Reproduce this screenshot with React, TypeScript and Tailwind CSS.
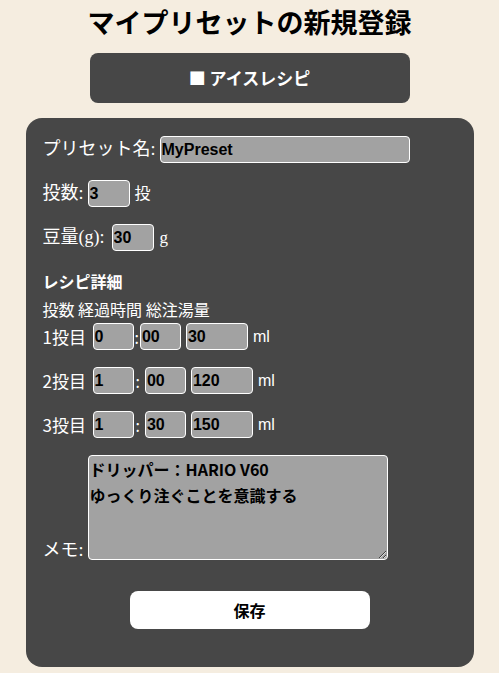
import React from "react";

const serif = { fontFamily: '"Liberation Serif", "Noto Sans CJK JP", serif' };
const inpFont = { fontFamily: '"Liberation Sans", "Noto Sans CJK JP", sans-serif' };

function Inp({ w, value }: { w: string; value: string }) {
  return (
    <input
      readOnly
      value={value}
      style={inpFont}
      className={`${w} h-[27px] bg-[#a2a2a2] border border-white rounded-[4px] px-[1px] text-[16px] font-bold text-black outline-none`}
    />
  );
}

export default function App() {
  const rows = [
    { n: "1投目", m: "0", s: "00", t: "30", tight: true },
    { n: "2投目", m: "1", s: "00", t: "120", tight: false },
    { n: "3投目", m: "1", s: "30", t: "150", tight: false },
  ];
  return (
    <div className="min-h-[673px] w-full bg-[#f5ede0] flex flex-col items-center font-['Noto_Sans_CJK_JP',sans-serif]">
      <h1 className="mt-[2px] text-[27px] leading-[40px] font-bold text-black">マイプリセットの新規登録</h1>
      <div className="mt-[11px] w-[320px] h-[50px] rounded-[8px] bg-[#474747] flex items-center justify-center text-white text-[17px] font-bold">
        ■ アイスレシピ
      </div>
      <div className="mt-[15px] w-[448px] h-[549px] rounded-[16px] bg-[#474747] pl-[17px] pt-[18px] text-white">
        <div className="flex items-center h-[27px]">
          <span className="text-[18px] mr-[4px]" style={serif}>プリセット名:</span>
          <Inp w="w-[250px]" value="MyPreset" />
        </div>
        <div className="flex items-center h-[27px] mt-[17px]">
          <span className="text-[18px] mr-[4px]" style={serif}>投数:</span>
          <Inp w="w-[42px]" value="3" />
          <span className="text-[16px] ml-[5px]" style={serif}>投</span>
        </div>
        <div className="flex items-center h-[27px] mt-[17px]">
          <span className="text-[18px] mr-[7px]" style={serif}>豆量(g):</span>
          <Inp w="w-[42px]" value="30" />
          <span className="text-[17px] ml-[6px]" style={serif}>g</span>
        </div>
        <div className="mt-[19px] text-[16px] font-bold leading-[22px]">レシピ詳細</div>
        <div className="mt-[6px] text-[16px] leading-[22px]">投数 経過時間 総注湯量</div>
        {rows.map((r, i) => (
          <div key={i} className={`flex items-center h-[27px] ${i === 0 ? "mt-[3px]" : "mt-[17px]"}`}>
            <span className="text-[17px] w-[50px]">{r.n}</span>
            <Inp w="w-[41px]" value={r.m} />
            <span className={`text-[16px] ${r.tight ? "mx-[1px]" : "ml-[2px] mr-[5px]"}`}>:</span>
            <Inp w="w-[41px]" value={r.s} />
            <span className="w-[5px]" />
            <Inp w="w-[62px]" value={r.t} />
            <span className="text-[16px] ml-[5px]" style={inpFont}>ml</span>
          </div>
        ))}
        <div className="flex items-end mt-[17px]">
          <span className="text-[18px] mr-[4px] leading-[20px]" style={serif}>メモ:</span>
          <textarea
            readOnly
            value={"ドリッパー：HARIO V60\nゆっくり注ぐことを意識する"}
            className="w-[300px] h-[105px] bg-[#a2a2a2] border border-white rounded-[4px] px-[1px] text-[16px] font-bold leading-[26px] text-black outline-none"
          />
        </div>
        <div className="flex justify-center pr-[17px] mt-[31px]">
          <div className="w-[240px] h-[38px] bg-white rounded-[8px] flex items-center justify-center text-black text-[16px] font-bold">
            保存
          </div>
        </div>
      </div>
    </div>
  );
}
